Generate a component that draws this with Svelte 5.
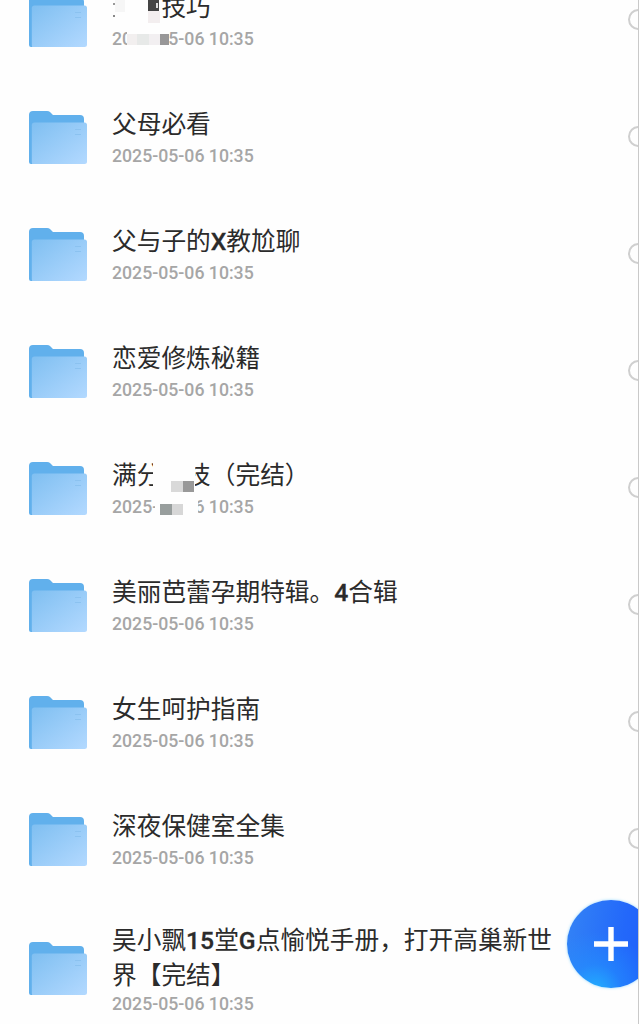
<script lang="ts">
  type Block = { x: number; y: number; w: number; h: number; color: string };
  type Folder = { name: string; date: string; mosaic?: Block[]; tall?: boolean };

  const date = '2025-05-06 10:35';

  // mosaic blocks are relative to the left edge of the text and the top of the row
  const folders: Folder[] = [
    {
      name: '\u3000\u3000技巧',
      date,
      mosaic: [
        { x: 1, y: 41, w: 2, h: 2, color: '#999' },
        { x: 1, y: 53, w: 2, h: 2, color: '#888' },
        { x: 3, y: 38, w: 10, h: 12, color: '#f6f6f6' },
        { x: 36, y: 38, w: 11, h: 11, color: '#444' },
        { x: 44, y: 41, w: 2, h: 5, color: '#ddd' },
        { x: 36, y: 49, w: 12, h: 12, color: '#f3eeef' },
        { x: 15, y: 64, w: 42, h: 19, color: '#fefefe' },
        { x: 15, y: 72, w: 12, h: 11, color: '#f2efef' },
        { x: 25, y: 72, w: 12, h: 11, color: '#e7e9e8' },
        { x: 37, y: 72, w: 12, h: 11, color: '#f2eff1' },
        { x: 48, y: 72, w: 9, h: 11, color: '#989798' }
      ]
    },
    { name: '父母必看', date },
    { name: '父与子的X教尬聊', date },
    { name: '恋爱修炼秘籍', date },
    {
      name: '满分\u3000技（完结）',
      date,
      mosaic: [
        { x: 41, y: 28, w: 42, h: 37, color: '#fefefe' },
        { x: 59, y: 51, w: 12, h: 11, color: '#d9d9d9' },
        { x: 71, y: 51, w: 11, h: 11, color: '#999' },
        { x: 43, y: 66, w: 43, h: 20, color: '#fefefe' },
        { x: 48, y: 74, w: 12, h: 11, color: '#989e9d' },
        { x: 60, y: 74, w: 11, h: 11, color: '#d7d7d7' }
      ]
    },
    { name: '美丽芭蕾孕期特辑。4合辑', date },
    { name: '女生呵护指南', date },
    { name: '深夜保健室全集', date },
    { name: '吴小飘15堂G点愉悦手册，打开高巢新世界【完结】', date, tall: true }
  ];

  const split = (name: string) => name.split(/([A-Z0-9]+)/);
</script>

<main class="screen">
  <ul class="list">
    {#each folders as folder}
      <li class="row" class:tall={folder.tall}>
        <svg class="icon" viewBox="0 0 60 56" aria-hidden="true">
          <defs>
            <linearGradient id="front" x1="0" y1="0" x2="1" y2="1">
              <stop offset="0" stop-color="#7fbff1" />
              <stop offset="1" stop-color="#b3d9ff" />
            </linearGradient>
          </defs>
          <path
            d="M1 5a4 4 0 0 1 4-4h14q2 0 3 1l3 3h27q4 0 4 4v43q0 2-2 2H3q-2 0-2-2z"
            fill="#61b0ec"
          />
          <path
            d="M6.500 12.500h50q2.500 0 2.500 2.500v36.500q0 2.500-2.500 2.500H4.200Q3.800 54 3.800 51V15.200q0-2.700 2.700-2.700z"
            fill="url(#front)"
          />
          <path d="M47 19.500h6M47 24.500h6" stroke="#8bc2f0" stroke-width="1" />
        </svg>
        <div class="text">
          <span class="name">
            {#each split(folder.name) as part, i}{#if i % 2}<b>{part}</b>{:else}{part}{/if}{/each}
          </span>
          <time class="date">{folder.date}</time>
        </div>
        <span class="check"></span>
        {#each folder.mosaic ?? [] as block}
          <i
            class="block"
            style="left: {112 + block.x}px; top: {block.y}px; width: {block.w}px; height: {block.h}px; background: {block.color}"
          ></i>
        {/each}
      </li>
    {/each}
  </ul>

  <button class="add" type="button" aria-label="新建">
    <svg viewBox="0 0 34 34" aria-hidden="true">
      <path d="M17 0v34M0 17h34" stroke="#fff" stroke-width="5.400" />
    </svg>
  </button>
</main>

<style>
  :global(body) {
    background: #fefefe;
  }

  .screen {
    position: relative;
    box-sizing: border-box;
    width: 639px;
    height: 1024px;
    overflow: hidden;
    border-right: 1px solid #c9c9c9;
    font-family: Roboto, 'Noto Sans CJK SC', sans-serif;
  }

  .list {
    list-style: none;
    margin: -38px 0 0;
    padding: 0;
  }

  .row {
    position: relative;
    display: flex;
    align-items: center;
    box-sizing: border-box;
    height: 117px;
    padding-left: 28px;
  }

  .row.tall {
    height: 141px;
  }

  .icon {
    flex: none;
    width: 60px;
    height: 56px;
  }

  .text {
    display: flex;
    flex-direction: column;
    gap: 4px;
    width: 450px;
    margin-left: 24px;
    padding-bottom: 2px;
  }

  .tall .text {
    gap: 1px;
    padding-bottom: 0;
  }

  .name {
    color: #2b2b2b;
    font-size: 24.700px;
    line-height: 35px;
  }

  .name b {
    font-weight: 500;
    -webkit-text-stroke: 0.3px #2b2b2b;
  }

  .date {
    color: #a6a6a6;
    font-size: 17.700px;
    font-weight: 500;
    line-height: 20px;
  }

  .check {
    position: absolute;
    right: -11px;
    top: 47px;
    box-sizing: border-box;
    width: 21px;
    height: 21px;
    border: 2px solid #cfcfcf;
    border-radius: 50%;
  }

  .tall .check {
    display: none;
  }

  .block {
    position: absolute;
  }

  .add {
    position: absolute;
    left: 567px;
    top: 900px;
    display: grid;
    place-items: center;
    width: 88px;
    height: 88px;
    padding: 0;
    border: 0;
    border-radius: 50%;
    background:
      radial-gradient(circle at 32% 104%, #22b0ff 0, rgba(34, 150, 255, 0.5) 25%, transparent 55%),
      linear-gradient(100deg, #3484f5, #2368fa 60%, #1f5cfb);
    box-shadow: 0 0 3px rgba(70, 190, 255, 0.6);
  }

  .add svg {
    width: 34px;
    height: 34px;
  }
</style>
